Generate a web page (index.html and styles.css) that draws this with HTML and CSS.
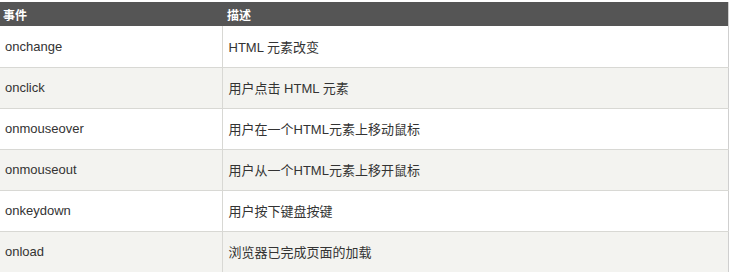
FILE: index.html
```html
<!DOCTYPE html>
<html lang="zh">
<head>
<meta charset="utf-8">
<link rel="stylesheet" href="styles.css">
</head>
<body>
<table class="ref">
  <thead>
    <tr><th class="c1">事件</th><th class="c2">描述</th></tr>
  </thead>
  <tbody>
    <tr><td class="c1">onchange</td><td class="c2">HTML 元素改变</td></tr>
    <tr><td class="c1">onclick</td><td class="c2">用户点击 HTML 元素</td></tr>
    <tr><td class="c1">onmouseover</td><td class="c2">用户在一个HTML元素上移动鼠标</td></tr>
    <tr><td class="c1">onmouseout</td><td class="c2">用户从一个HTML元素上移开鼠标</td></tr>
    <tr><td class="c1">onkeydown</td><td class="c2">用户按下键盘按键</td></tr>
    <tr><td class="c1">onload</td><td class="c2">浏览器已完成页面的加载</td></tr>
  </tbody>
</table>
</body>
</html>
```
FILE: styles.css
```css
html, body {
  margin: 0;
  padding: 0;
  background: #fff;
}
body {
  padding-top: 2px;
  font-family: Arial, "Liberation Sans", "Noto Sans CJK SC", sans-serif;
}
.ref {
  width: 729px;
  border-collapse: collapse;
  table-layout: fixed;
  border-right: 1px solid #cfcfcf;
}
.ref .c1 { width: 222px; }
.ref th {
  background: #555555;
  color: #fff;
  font-size: 12px;
  font-weight: bold;
  text-align: left;
  height: 24px;
  padding: 0 0 0 3px;
  box-sizing: border-box;
  vertical-align: middle;
}
.ref th.c2 { padding-left: 5px; }
.ref td {
  height: 41px;
  box-sizing: border-box;
  font-size: 13px;
  color: #333;
  padding: 0 0 0 6px;
  vertical-align: middle;
  border-bottom: 1px solid #d8d8d4;
}
.ref td.c1 { border-right: 1px solid #d8d8d4; padding-left: 5px; }
.ref tbody tr:nth-child(odd) td { background: #fff; }
.ref tbody tr:nth-child(even) td { background: #f3f3f0; }
```
